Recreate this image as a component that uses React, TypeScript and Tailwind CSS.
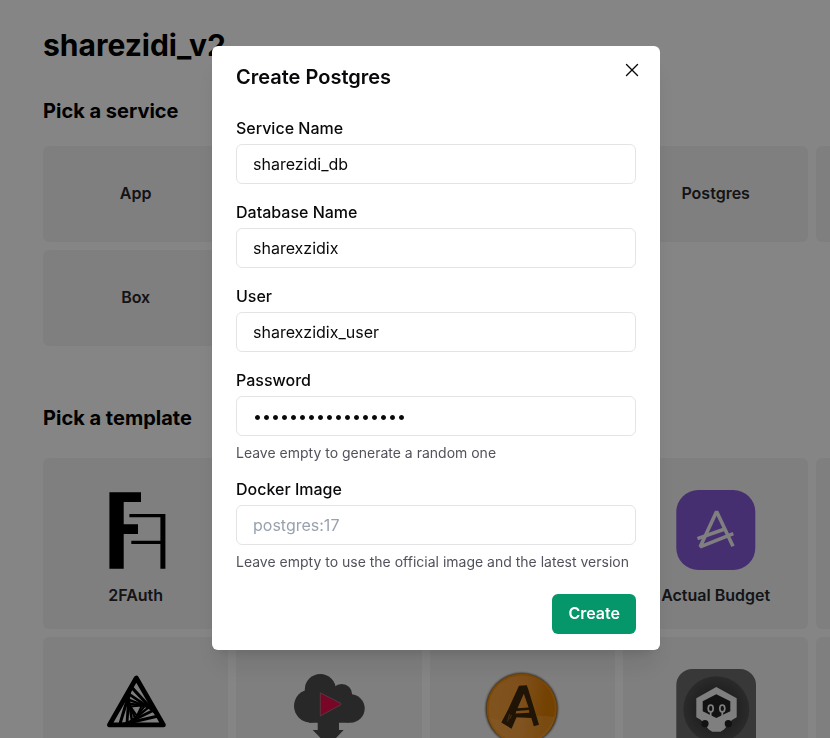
import { useState, type ReactNode } from "react";
import { X } from "lucide-react";

const services = ["App", "", "", "Postgres", "", "", "Box"];

function TwoFAuthIcon() {
  return (
    <svg viewBox="0 0 80 80" className="size-20" aria-hidden="true">
      <path d="M13.4 2.3H45V12H27.7V34.3H42V44H27.7V78.7H13.4Z" />
      <path d="M33.4 24H69.4V78.7H64.4V54H35.3V50.7H64.4V27.3H33.4Z" />
    </svg>
  );
}

function ActualIcon() {
  return (
    <svg viewBox="0 0 80 80" className="size-20" aria-hidden="true">
      <rect x="0.3" width="79" height="80" rx="22" fill="#855ad7" />
      <g fill="none" stroke="#f4f4f5" strokeWidth="3.6" strokeLinejoin="bevel">
        <path d="M57 56.3L40.6 21.5L24.2 56.8L57.3 43.6" />
        <path d="M21.5 48.6L48.8 39" />
      </g>
    </svg>
  );
}

type Point = [number, number];

function nestedTriangles(start: Point[], steps: number, t: number) {
  const result: Point[][] = [];
  let current = start;
  for (let i = 0; i < steps; i++) {
    const from = current;
    current = from.map((p, k) => {
      const q = from[(k + 1) % 3];
      return [p[0] + (q[0] - p[0]) * t, p[1] + (q[1] - p[1]) * t] as Point;
    });
    result.push(current);
  }
  return result;
}

const outerTriangle: Point[] = [
  [40.3, 9],
  [13.4, 55.9],
  [67.4, 55.9],
];

function TriangleIcon() {
  return (
    <svg viewBox="0 0 80 80" className="size-20" fill="none" stroke="#000" strokeLinejoin="round" aria-hidden="true">
      <polygon points={outerTriangle.join(" ")} strokeWidth="4.8" />
      {nestedTriangles(outerTriangle, 5, 0.19).map((points, i) => (
        <polygon key={i} points={points.join(" ")} strokeWidth={3.1 - i * 0.3} />
      ))}
    </svg>
  );
}

function CloudPlayIcon() {
  return (
    <svg viewBox="0 0 80 80" className="size-20" aria-hidden="true">
      <g fill="#4d4d4d">
        <circle cx="21.5" cy="37" r="16.5" />
        <circle cx="31.3" cy="20.5" r="15.5" />
        <circle cx="52.7" cy="25.5" r="10.5" />
        <circle cx="61.5" cy="39.5" r="14.2" />
        <path d="M20 30H60V53.7H50V61H54.7L39.3 77L23.7 61H28.7V53.7H20Z" />
      </g>
      <path d="M31.3 23.8L51.5 34.2Q52.8 35 51.5 35.9L31.3 47Z" fill="#e60f4c" stroke="#a58590" strokeWidth="0.7" />
    </svg>
  );
}

function CoinIcon() {
  return (
    <svg viewBox="0 0 80 80" className="size-20 overflow-visible" aria-hidden="true">
      <defs>
        <linearGradient id="coin-face" x1="0" x2="1" y1="0.2" y2="0.35">
          <stop offset="0" stopColor="#f7a13c" />
          <stop offset="0.55" stopColor="#f09630" />
          <stop offset="0.9" stopColor="#dd7d00" />
        </linearGradient>
        <filter id="coin-shadow" x="-20%" y="-20%" width="140%" height="140%">
          <feGaussianBlur stdDeviation="1.3" />
        </filter>
      </defs>
      <circle cx="39.7" cy="39.9" r="36" fill="#45301a" filter="url(#coin-shadow)" />
      <circle cx="39.7" cy="39.7" r="35.2" fill="#ec8a0c" />
      <circle cx="39.7" cy="39.7" r="33.2" fill="url(#coin-face)" />
      <path d="M7 49Q24 53 38 49T72.5 48A33.2 33.2 0 0 1 7 49Z" fill="#ffb45c" opacity="0.35" />
      <path
        fillRule="evenodd"
        fill="#3d270c"
        d="M37 16.8L44.8 16.2L46.8 22L57 55.8L51.8 57.3L49.4 49L34.5 48.3L29.6 59.8L19.3 53.6L26 40.8ZM41.8 24.8L35.5 39.2L46.6 38.4ZM34.3 42L33.6 44.6L47.3 43.8L47 41Z"
      />
      <path d="M27.5 45L25.6 52.5M29.5 46L27.6 50" stroke="#b5752c" strokeWidth="0.7" />
    </svg>
  );
}

function HexBotIcon() {
  return (
    <svg viewBox="0 0 80 80" className="size-20" aria-hidden="true">
      <defs>
        <radialGradient id="bot-disc">
          <stop offset="0.5" stopColor="#3c3c3e" />
          <stop offset="1" stopColor="#525254" />
        </radialGradient>
      </defs>
      <rect x="0.3" width="79.7" height="84" rx="16" fill="#6b6b6d" />
      <circle cx="40.3" cy="40.3" r="33" fill="url(#bot-disc)" />
      <path
        fill="#f4f4f5"
        d="M40.3 18L60.7 29.3V48.3L56 51L48 60.5L44.5 62.7H36.3L32.8 60.5L25 51L20.3 48.3V29.3Z"
      />
      <path fill="#232325" d="M40.3 25.3L54.3 32.3V42.3L40.3 49L26.7 42.3V32.3Z" />
      <g fill="none" stroke="#f4f4f5" strokeWidth="1.7">
        <ellipse cx="34.7" cy="39.4" rx="2.5" ry="3.4" />
        <ellipse cx="46.3" cy="39.4" rx="2.5" ry="3.4" />
        <path d="M34.7 42.5V48M46.3 42.5V48" />
      </g>
      <circle cx="29" cy="54.7" r="3.6" fill="#232325" />
      <circle cx="52.3" cy="54.7" r="3.6" fill="#232325" />
    </svg>
  );
}

const templates: { name: string; icon: ReactNode }[] = [
  { name: "2FAuth", icon: <TwoFAuthIcon /> },
  { name: "", icon: null },
  { name: "", icon: null },
  { name: "Actual Budget", icon: <ActualIcon /> },
  { name: "", icon: null },
  { name: "", icon: null },
  { name: "", icon: <TriangleIcon /> },
  { name: "", icon: <CloudPlayIcon /> },
  { name: "", icon: <CoinIcon /> },
  { name: "", icon: <HexBotIcon /> },
  { name: "", icon: null },
  { name: "", icon: null },
];

type FieldProps = {
  id: string;
  label: string;
  type?: string;
  initial?: string;
  placeholder?: string;
  hint?: string;
};

function Field({ id, label, type = "text", initial = "", placeholder, hint }: FieldProps) {
  const [value, setValue] = useState(initial);
  return (
    <div>
      <label htmlFor={id} className="mb-1 block font-medium leading-6">
        {label}
      </label>
      <input
        id={id}
        type={type}
        value={value}
        placeholder={placeholder}
        autoComplete="off"
        onChange={(e) => setValue(e.target.value)}
        className="block h-10 w-full rounded-md border border-zinc-200 bg-white px-4 outline-none placeholder:text-gray-400 focus:border-emerald-600"
      />
      {hint && <p className="mt-2 text-sm leading-[17px] text-zinc-600">{hint}</p>}
    </div>
  );
}

function CreateDialog() {
  return (
    <div className="fixed inset-0 flex items-start justify-center overflow-hidden bg-black/48 pt-[46px] pl-[42px]">
      <form
        role="dialog"
        aria-labelledby="dialog-title"
        onSubmit={(e) => e.preventDefault()}
        className="relative w-full max-w-md rounded-md bg-white px-6 py-4 text-zinc-950 shadow-xl"
      >
        <h2 id="dialog-title" className="mb-6 text-xl leading-[30px] font-semibold">
          Create Postgres
        </h2>
        <button type="button" aria-label="Close" className="absolute top-2 right-3 flex size-8 items-center justify-center rounded-md">
          <X size={22} strokeWidth={1.5} />
        </button>
        <div className="flex flex-col gap-4">
          <Field id="service" label="Service Name" initial="sharezidi_db" />
          <Field id="database" label="Database Name" initial="sharexzidix" />
          <Field id="user" label="User" initial="sharexzidix_user" />
          <Field
            id="password"
            label="Password"
            type="password"
            initial="12345678901234567"
            hint="Leave empty to generate a random one"
          />
          <Field
            id="image"
            label="Docker Image"
            placeholder="postgres:17"
            hint="Leave empty to use the official image and the latest version"
          />
        </div>
        <div className="mt-6 flex justify-end">
          <button type="submit" className="h-10 rounded-md bg-[#059669] px-4 pb-0.5 font-semibold text-white">
            Create
          </button>
        </div>
      </form>
    </div>
  );
}

export default function App() {
  return (
    <div className="h-screen overflow-hidden bg-white font-[Inter,sans-serif] text-base text-black">
      <main className="ml-[43px] w-6xl pt-[27px]">
        <h1 className="text-3xl leading-9 font-bold">sharezidi_v2</h1>
        <h2 className="mt-[33px] mb-5 text-xl leading-[30px] font-bold">Pick a service</h2>
        <div className="grid grid-cols-6 gap-2">
          {services.map((name, i) => (
            <button key={i} type="button" className="h-24 rounded-md bg-zinc-100 pb-0.5 font-semibold text-zinc-800">
              {name}
            </button>
          ))}
        </div>
        <h2 className="mt-14 mb-6 text-xl leading-8 font-bold">Pick a template</h2>
        <div className="grid grid-cols-6 gap-2">
          {templates.map(({ name, icon }, i) => (
            <button
              key={i}
              type="button"
              className="flex flex-col items-center gap-[13px] rounded-md bg-zinc-100 pt-8 pb-[22px] font-semibold text-zinc-800"
            >
              <span className="block size-20">{icon}</span>
              <span className="block h-6 leading-6">{name}</span>
            </button>
          ))}
        </div>
      </main>
      <CreateDialog />
    </div>
  );
}
